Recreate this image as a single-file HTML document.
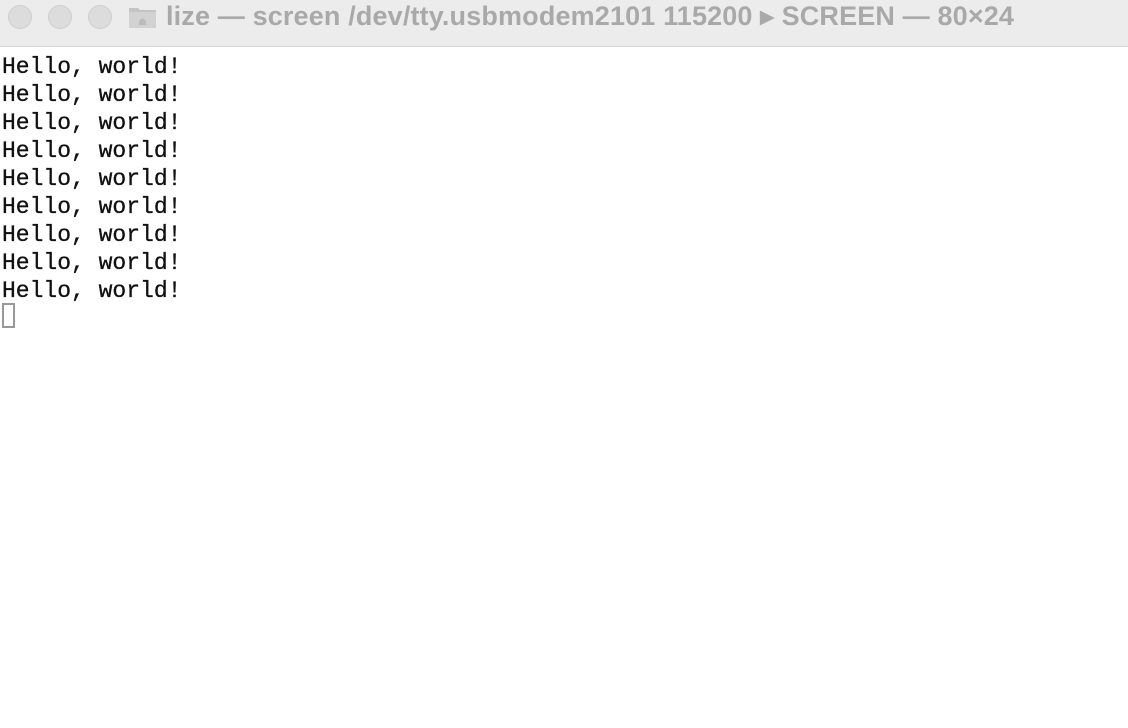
<!DOCTYPE html>
<html><head><style>
body{margin:0;width:1128px;height:728px;background:#fff;overflow:hidden;position:relative}
.bar{position:absolute;left:0;top:0;width:1128px;height:46px;background:#ececec;border-bottom:1px solid #d8d8d8}
.c{position:absolute;top:5px;width:24px;height:24px;border-radius:50%;background:#dcdcdc;border:1px solid #cfcfcf;box-sizing:border-box}
.title{position:absolute;left:166px;top:1px;font:bold 27px "Liberation Sans",sans-serif;color:#a9a9a9;white-space:nowrap;letter-spacing:0.15px}
.folder{position:absolute;left:128px;top:5px;width:29px;height:24px}
pre{position:absolute;left:2px;top:53px;margin:0;font:23px/28px "Liberation Mono",monospace;color:#111;-webkit-text-stroke:0.3px #111}
.cur{position:absolute;left:2px;top:303px;width:13px;height:25px;border:2px solid #999;box-sizing:border-box}
</style></head><body>
<div class="bar">
<div class="c" style="left:8px"></div><div class="c" style="left:48px"></div><div class="c" style="left:88px"></div>
<svg class="folder" viewBox="0 0 29 24"><path d="M1 3h9l2 2h16v18H1z" fill="#c4c4c4"/><rect x="1" y="7" width="27" height="16" fill="#d2d2d2"/><path d="M11 16l3.5-3 3.5 3v4h-7z" fill="#bbb"/></svg>
<div class="title">lize — screen /dev/tty.usbmodem2101 115200 ▸ SCREEN — 80×24</div>
</div>
<pre>Hello, world!
Hello, world!
Hello, world!
Hello, world!
Hello, world!
Hello, world!
Hello, world!
Hello, world!
Hello, world!</pre>
<div class="cur"></div>
</body></html>
